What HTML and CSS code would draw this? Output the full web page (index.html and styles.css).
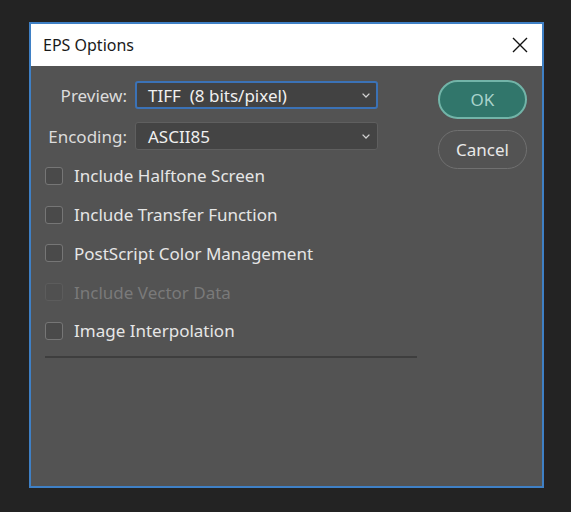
FILE: index.html
```html
<!DOCTYPE html>
<html lang="en">
<head>
<meta charset="utf-8">
<title>EPS Options</title>
<link rel="stylesheet" href="styles.css">
</head>
<body>
  <div class="dialog">
    <div class="titlebar">
      <span class="title">EPS Options</span>
      <span class="close" aria-label="Close">
        <svg width="16" height="16" viewBox="0 0 16 16"><path d="M1 1 L15 15 M15 1 L1 15" stroke="#111" stroke-width="1.4" fill="none"/></svg>
      </span>
    </div>
    <div class="content">
      <div class="form">
        <div class="field">
          <span class="label">Preview:</span>
          <div class="select focused">
            <span class="value">TIFF  (8 bits/pixel)</span>
            <svg class="chev" width="8" height="5" viewBox="0 0 8 5"><path d="M0.6 0.6 L4 4 L7.4 0.6" stroke="#d2d2d2" stroke-width="1.3" fill="none"/></svg>
          </div>
        </div>
        <div class="field second">
          <span class="label">Encoding:</span>
          <div class="select">
            <span class="value">ASCII85</span>
            <svg class="chev" width="8" height="5" viewBox="0 0 8 5"><path d="M0.6 0.6 L4 4 L7.4 0.6" stroke="#d2d2d2" stroke-width="1.3" fill="none"/></svg>
          </div>
        </div>
        <div class="checks">
          <div class="check"><span class="box"></span><span class="text">Include Halftone Screen</span></div>
          <div class="check"><span class="box"></span><span class="text">Include Transfer Function</span></div>
          <div class="check"><span class="box"></span><span class="text">PostScript Color Management</span></div>
          <div class="check disabled"><span class="box"></span><span class="text">Include Vector Data</span></div>
          <div class="check"><span class="box"></span><span class="text">Image Interpolation</span></div>
        </div>
        <div class="separator"></div>
      </div>
      <div class="buttons">
        <button class="btn primary">OK</button>
        <button class="btn">Cancel</button>
      </div>
    </div>
  </div>
</body>
</html>
```
FILE: styles.css
```css
html, body {
  margin: 0;
}
body {
  width: 571px;
  height: 512px;
  box-sizing: border-box;
  padding: 22px 0 0 29px;
  background: #232323;
  font-family: "Noto Sans", "Open Sans", sans-serif;
  overflow: hidden;
}
.dialog {
  width: 515px;
  height: 466px;
  box-sizing: border-box;
  border: 2px solid #3f80c5;
  background: #535353;
  display: flex;
  flex-direction: column;
  box-shadow: 3px 0 0 #262222;
}
.titlebar {
  height: 42px;
  flex: none;
  background: #ffffff;
  display: flex;
  align-items: center;
  justify-content: space-between;
  padding: 0 14px 0 12px;
}
.title {
  font-size: 16px;
  color: #1a1a1a;
}
.close {
  display: flex;
  width: 16px;
  height: 16px;
}
.content {
  display: flex;
  align-items: flex-start;
  padding-top: 15px;
}
.form {
  margin-left: 14px;
  width: 372px;
}
.field {
  display: flex;
  align-items: center;
  height: 28px;
}
.field.second {
  margin-top: 13px;
}
.label {
  width: 82px;
  margin-right: 8px;
  text-align: right;
  font-size: 17px;
  color: #dcdcdc;
}
.select {
  width: 243px;
  height: 28px;
  box-sizing: border-box;
  border: 1px solid #5f5f5f;
  border-radius: 3px;
  background: #444444;
  display: flex;
  align-items: center;
  justify-content: space-between;
  padding: 0 7px 0 12px;
}
.select.focused {
  border: 2px solid #3b72b6;
  background: #424242;
  padding: 0 6px 0 11px;
}
.value {
  white-space: pre;
  font-size: 17px;
  color: #f0f0f0;
}
.chev {
  display: block;
}
.checks {
  margin-top: 6.6px;
}
.check {
  height: 38.75px;
  display: flex;
  align-items: center;
}
.box {
  width: 18px;
  height: 18px;
  box-sizing: border-box;
  border: 1.5px solid #767676;
  border-radius: 3px;
  background: #4a4a4a;
  margin-right: 11px;
}
.text {
  font-size: 17px;
  color: #e6e6e6;
}
.check.disabled .box {
  border-color: #5c5c5c;
  background: #505050;
}
.check.disabled .text {
  color: #7a7a7a;
}
.separator {
  margin-top: 6px;
  height: 2px;
  background: #3e3e3e;
}
.buttons {
  margin-left: 21px;
  margin-top: -1px;
  display: flex;
  flex-direction: column;
  gap: 11px;
}
.btn {
  width: 89px;
  height: 39px;
  box-sizing: border-box;
  border-radius: 20px;
  border: 1.5px solid #707070;
  background: #535353;
  font-family: "Noto Sans", "Open Sans", sans-serif;
  font-size: 17px;
  color: #e8e8e8;
  padding: 0;
}
.btn.primary {
  border: 2px solid #72b4a8;
  background: #31766b;
  color: #a9d3cb;
}
```
